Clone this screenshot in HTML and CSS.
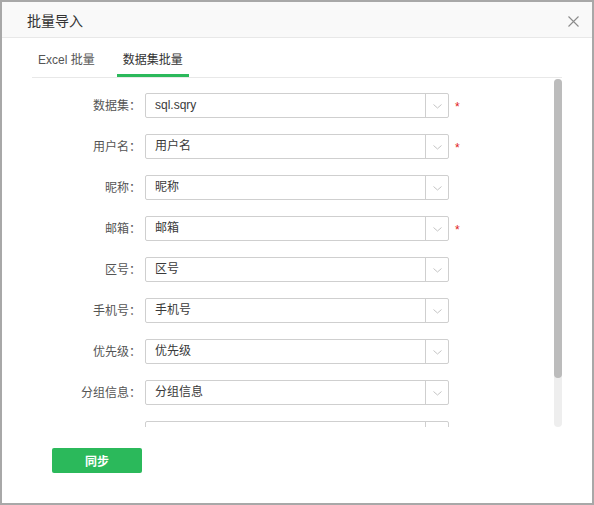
FILE: index.html
```html
<!DOCTYPE html>
<html lang="zh">
<head>
<meta charset="utf-8">
<title>批量导入</title>
<link rel="stylesheet" href="styles.css">
</head>
<body>
<div class="dialog">
  <div class="header">
    <span class="title">批量导入</span>
    <svg class="close" width="11" height="11" viewBox="0 0 11 11"><path d="M0.5 0.5 L10.5 10.5 M10.5 0.5 L0.5 10.5" stroke="#8c8c8c" stroke-width="1.1" fill="none"/></svg>
  </div>
  <div class="tabs">
    <div class="tab">Excel 批量</div>
    <div class="tab active">数据集批量</div>
  </div>
  <div class="body">
    <div class="form">
      <div class="row"><label class="label">数据集：</label><div class="select"><span class="value">sql.sqry</span><span class="arrow"><svg width="9" height="5" viewBox="0 0 9 5"><polyline points="0.5,0.5 4.5,4 8.5,0.5" fill="none" stroke="#c4c4c4" stroke-width="1"/></svg></span></div><span class="req">*</span></div>
      <div class="row"><label class="label">用户名：</label><div class="select"><span class="value">用户名</span><span class="arrow"><svg width="9" height="5" viewBox="0 0 9 5"><polyline points="0.5,0.5 4.5,4 8.5,0.5" fill="none" stroke="#c4c4c4" stroke-width="1"/></svg></span></div><span class="req">*</span></div>
      <div class="row"><label class="label">昵称：</label><div class="select"><span class="value">昵称</span><span class="arrow"><svg width="9" height="5" viewBox="0 0 9 5"><polyline points="0.5,0.5 4.5,4 8.5,0.5" fill="none" stroke="#c4c4c4" stroke-width="1"/></svg></span></div></div>
      <div class="row"><label class="label">邮箱：</label><div class="select"><span class="value">邮箱</span><span class="arrow"><svg width="9" height="5" viewBox="0 0 9 5"><polyline points="0.5,0.5 4.5,4 8.5,0.5" fill="none" stroke="#c4c4c4" stroke-width="1"/></svg></span></div><span class="req">*</span></div>
      <div class="row"><label class="label">区号：</label><div class="select"><span class="value">区号</span><span class="arrow"><svg width="9" height="5" viewBox="0 0 9 5"><polyline points="0.5,0.5 4.5,4 8.5,0.5" fill="none" stroke="#c4c4c4" stroke-width="1"/></svg></span></div></div>
      <div class="row"><label class="label">手机号：</label><div class="select"><span class="value">手机号</span><span class="arrow"><svg width="9" height="5" viewBox="0 0 9 5"><polyline points="0.5,0.5 4.5,4 8.5,0.5" fill="none" stroke="#c4c4c4" stroke-width="1"/></svg></span></div></div>
      <div class="row"><label class="label">优先级：</label><div class="select"><span class="value">优先级</span><span class="arrow"><svg width="9" height="5" viewBox="0 0 9 5"><polyline points="0.5,0.5 4.5,4 8.5,0.5" fill="none" stroke="#c4c4c4" stroke-width="1"/></svg></span></div></div>
      <div class="row"><label class="label">分组信息：</label><div class="select"><span class="value">分组信息</span><span class="arrow"><svg width="9" height="5" viewBox="0 0 9 5"><polyline points="0.5,0.5 4.5,4 8.5,0.5" fill="none" stroke="#c4c4c4" stroke-width="1"/></svg></span></div></div>
      <div class="row"><span class="label"></span><div class="select"><span class="value"></span><span class="arrow"></span></div></div>
    </div>
    <div class="scrollbar"><div class="thumb"></div></div>
  </div>
  <div class="footer">
    <button class="btn">同步</button>
  </div>
</div>
</body>
</html>
```

FILE: styles.css
```css
* { box-sizing: border-box; }
html, body { margin: 0; padding: 0; background: #fff; }
body {
  font-family: "Liberation Sans", "Noto Sans CJK SC", sans-serif;
  font-size: 12px;
  color: #333;
}
.dialog {
  width: 594px;
  height: 505px;
  border: 2px solid #a8a8a8;
  display: flex;
  flex-direction: column;
  background: #fff;
}
.header {
  height: 36px;
  flex: none;
  background: #f9f9f9;
  border-bottom: 1px solid #e8e8e8;
  display: flex;
  align-items: center;
  justify-content: space-between;
  padding: 3px 13px 0 25px;
}
.title {
  font-size: 14px;
  color: #333;
  line-height: 18px;
}
.close { display: block; margin-top: 1px; }
.tabs {
  flex: none;
  display: flex;
  gap: 16px;
  margin: 0 30px;
  border-bottom: 1px solid #e8e8e8;
}
.tab {
  padding: 14px 6px 0;
  height: 39px;
  line-height: 17px;
  font-size: 12px;
  color: #555;
  border-bottom: 3px solid transparent;
}
.tab.active {
  color: #333;
  border-bottom-color: #2bb95b;
}
.body {
  flex: none;
  height: 349px;
  display: flex;
  margin: 0 30px;
  overflow: hidden;
}
.form {
  flex: 1;
  padding-top: 15px;
  display: flex;
  flex-direction: column;
  gap: 16px;
}
.row {
  display: flex;
  align-items: center;
  height: 25px;
  flex: none;
}
.label {
  width: 109px;
  text-align: right;
  color: #555;
  margin-right: 4px;
  line-height: 16px;
}
.select {
  width: 304px;
  height: 25px;
  border: 1px solid #cfcfcf;
  border-radius: 2px;
  display: flex;
  align-items: stretch;
}
.value {
  flex: 1;
  padding-left: 9px;
  line-height: 23px;
  color: #3a3a3a;
}
.arrow {
  width: 23px;
  border-left: 1px solid #cfcfcf;
  display: flex;
  align-items: center;
  justify-content: center;
}
.arrow svg { display: block; margin-top: 1px; }
.req {
  color: #e02020;
  margin-left: 6px;
  font-size: 12px;
  line-height: 12px;
  align-self: flex-start;
  margin-top: 8px;
}
.scrollbar {
  width: 8px;
  flex: none;
  margin-top: 1px;
  height: 348px;
  border-radius: 4px;
  background: #eeeeee;
}
.thumb {
  height: 299px;
  border-radius: 4px;
  background: #bcbcbc;
}
.footer {
  flex: none;
  padding: 21px 0 0 50px;
}
.btn {
  width: 90px;
  height: 25px;
  border: none;
  border-radius: 2px;
  background: #2bb95b;
  color: #fff;
  font-family: "Liberation Sans", "Noto Sans CJK SC", sans-serif;
  font-size: 12px;
  font-weight: bold;
  padding: 0;
}
```
